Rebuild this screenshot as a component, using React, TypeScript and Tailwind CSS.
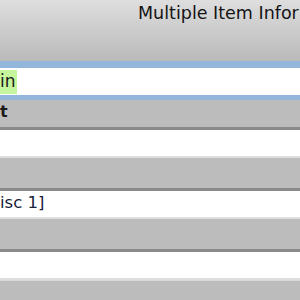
const font = { fontFamily: '"DejaVu Sans", "Lucida Grande", sans-serif' };

function LabelRow({ label }: { label: string }) {
  return (
    <div className="flex h-[33px] items-start border-b-[3px] border-[#8a8a8a] bg-[#bcbcbc]">
      <span className="mt-[1px] text-[16px] font-bold leading-[20px] text-[#1a1a1a]">
        {label}
      </span>
    </div>
  );
}

function ValueRow({ value }: { value?: string }) {
  return (
    <div className="flex h-[28px] items-start border-b-[2px] border-[#dedede] bg-white">
      {value && (
        <span className="mt-[2px] text-[16.5px] leading-[20px] text-[#17223d]">{value}</span>
      )}
    </div>
  );
}

export default function App() {
  return (
    <div className="h-[300px] w-[300px] overflow-hidden bg-white" style={font}>
      <div className="flex h-[61px] items-start overflow-hidden whitespace-nowrap bg-gradient-to-b from-[#dedede] to-[#bababa] pl-[138px]">
        <span className="mt-[1px] text-[17.5px] leading-[24px] text-[#141414]">
          Multiple Item Infor
        </span>
      </div>

      <div className="h-[39px] border-b-[5px] border-t-[7px] border-[#93b6dc] bg-white">
        <div className="flex h-[27px] items-center">
          <span className="mt-[1px] flex h-[24px] items-center bg-[#c5f59c] pr-[1px] text-[17px] text-[#1a1a1a]">
            in
          </span>
        </div>
      </div>

      <div className="flex h-[30px] items-start border-b-[3px] border-[#8a8a8a] bg-[#bcbcbc]">
        <span className="mt-[2px] text-[16px] font-bold leading-[20px] text-[#1a1a1a]">t</span>
      </div>
      <ValueRow />
      <LabelRow label="" />
      <ValueRow value="isc 1]" />
      <LabelRow label="" />
      <ValueRow />
      <div className="h-[30px] border-t border-[#d8d8d8] bg-[#bcbcbc]" />
    </div>
  );
}
